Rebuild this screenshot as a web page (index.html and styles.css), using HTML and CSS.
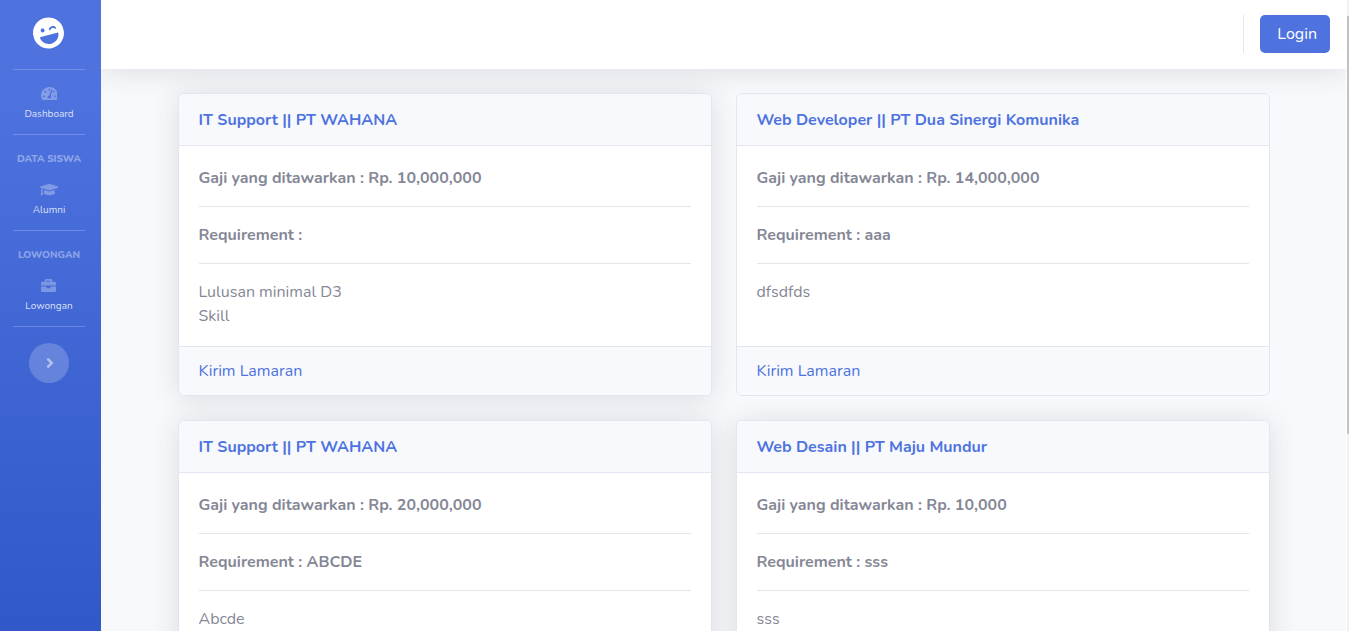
FILE: index.html
```html
<!DOCTYPE html>
<html lang="id">
<head>
<meta charset="utf-8">
<meta name="viewport" content="width=device-width, initial-scale=1">
<title>Lowongan</title>
<link rel="stylesheet" href="styles.css">
</head>
<body>
<div class="app">
  <nav class="sidebar" aria-label="Menu">
    <a class="brand" href="#" aria-label="Beranda">
      <svg class="brand-icon" viewBox="0 0 496 512"><path d="M248 8C111 8 0 119 0 256s111 248 248 248 248-111 248-248S385 8 248 8zm20.100 198c4-25.200 34.200-42.100 59.900-42.100s55.900 16.900 59.900 42.100c1.700 11.100-11.400 18.300-19.800 10.800l-9.500-8.500c-14.800-13.200-46.200-13.200-61 0L288 216.800c-8.300 7.400-21.600.4-19.900-10.800zM168 160c17.700 0 32 14.300 32 32s-14.300 32-32 32-32-14.300-32-32 14.300-32 32-32zm230.900 141C391.400 373.900 327.700 432 247 432c-80.700 0-142-54.900-150.900-128-1.200-9.500 6.300-18 15.900-18h271c9.600 0 17.100 5.400 15.900 15z"/></svg>
    </a>
    <hr class="divider">
    <a class="nav-link" href="#">
      <svg class="nav-icon" viewBox="0 0 576 512"><path d="M288 32C128.940 32 0 160.940 0 320c0 52.800 14.250 102.260 39.060 144.800 5.610 9.620 16.300 15.200 27.440 15.200h443c11.140 0 21.830-5.580 27.440-15.200C561.750 422.260 576 372.800 576 320c0-159.060-128.940-288-288-288zm0 64c14.710 0 26.580 10.130 30.320 23.650-1.110 2.260-2.640 4.230-3.450 6.670l-9.220 27.670c-5.130 3.490-10.970 6.010-17.640 6.010-17.670 0-32-14.330-32-32S270.330 96 288 96zM96 384c-17.670 0-32-14.330-32-32s14.330-32 32-32 32 14.330 32 32-14.330 32-32 32zm48-160c-17.670 0-32-14.330-32-32s14.330-32 32-32 32 14.330 32 32-14.330 32-32 32zm246.770-72.410l-61.330 184C343.130 347.330 352 364.540 352 384c0 11.720-3.380 22.550-8.880 32H232.880c-5.500-9.450-8.880-20.280-8.880-32 0-33.940 26.500-61.430 59.900-63.590l61.340-184.010c4.170-12.560 17.730-19.450 30.360-15.170 12.570 4.190 19.350 17.790 15.170 30.360zm14.660 57.200l15.520-46.550c3.470-1.290 7.130-2.230 11.050-2.230 17.670 0 32 14.330 32 32s-14.330 32-32 32c-11.380-.01-20.890-6.280-26.570-15.220zM480 384c-17.670 0-32-14.330-32-32s14.330-32 32-32 32 14.330 32 32-14.330 32-32 32z"/></svg>
      <span>Dashboard</span>
    </a>
    <hr class="divider">
    <div class="heading">Data Siswa</div>
    <a class="nav-link" href="#">
      <svg class="nav-icon" viewBox="0 0 640 512"><path d="M622.340 153.200L343.400 67.500c-15.200-4.670-31.600-4.670-46.790 0L17.660 153.200c-23.540 7.230-23.540 38.360 0 45.590l48.630 14.940c-10.670 13.190-17.230 29.280-17.880 46.900C38.780 266.150 32 276.110 32 288c0 10.780 5.680 19.850 13.860 25.650L20.330 428.530C18.110 438.520 25.710 448 35.940 448h56.110c10.240 0 17.840-9.480 15.620-19.470L82.140 313.650C90.320 307.850 96 298.780 96 288c0-11.570-6.470-21.250-15.660-26.870.76-15.020 8.440-28.300 20.690-36.720L296.600 284.500c9.060 2.780 26.440 6.250 46.790 0l278.950-85.700c23.550-7.240 23.550-38.360 0-45.600zM352.790 315.090c-28.530 8.760-52.840 3.920-65.590 0l-145.020-44.550L128 384c0 35.350 85.960 64 192 64s192-28.650 192-64l-14.180-113.470-145.030 44.560z"/></svg>
      <span>Alumni</span>
    </a>
    <hr class="divider">
    <div class="heading">Lowongan</div>
    <a class="nav-link" href="#">
      <svg class="nav-icon" viewBox="0 0 512 512"><path d="M320 336c0 8.840-7.160 16-16 16h-96c-8.840 0-16-7.160-16-16v-48H0v144c0 25.600 22.400 48 48 48h416c25.600 0 48-22.400 48-48V288H320v48zm144-208h-80V80c0-25.600-22.400-48-48-48H176c-25.600 0-48 22.400-48 48v48H48c-25.600 0-48 22.400-48 48v80h512v-80c0-25.600-22.400-48-48-48zm-144 0H192V96h128v32z"/></svg>
      <span>Lowongan</span>
    </a>
    <hr class="divider">
    <button class="toggle" type="button" aria-label="Perluas menu">
      <svg class="toggle-icon" viewBox="0 0 256 512"><path d="M224.300 273l-136 136c-9.400 9.400-24.600 9.400-33.900 0l-22.600-22.600c-9.400-9.400-9.400-24.600 0-33.900l96.400-96.400-96.400-96.400c-9.400-9.400-9.400-24.600 0-33.900L54.300 103c9.400-9.400 24.600-9.400 33.900 0l136 136c9.500 9.400 9.500 24.600.1 34z"/></svg>
    </button>
  </nav>

  <div class="page">
    <header class="topbar">
      <span class="topbar-divider"></span>
      <a class="login" href="#">Login</a>
    </header>
    <main class="cards">
      <article class="card shadow">
        <h2 class="card-header">IT Support || PT WAHANA</h2>
        <div class="card-body">
          <b>Gaji yang ditawarkan : Rp. 10,000,000</b>
          <hr>
          <b>Requirement :</b>
          <hr>
          <p>Lulusan minimal D3<br>Skill</p>
        </div>
        <div class="card-footer"><a href="#">Kirim Lamaran</a></div>
      </article>
      <article class="card">
        <h2 class="card-header">Web Developer || PT Dua Sinergi Komunika</h2>
        <div class="card-body">
          <b>Gaji yang ditawarkan : Rp. 14,000,000</b>
          <hr>
          <b>Requirement : aaa</b>
          <hr>
          <p>dfsdfds</p>
        </div>
        <div class="card-footer"><a href="#">Kirim Lamaran</a></div>
      </article>
      <article class="card shadow">
        <h2 class="card-header">IT Support || PT WAHANA</h2>
        <div class="card-body">
          <b>Gaji yang ditawarkan : Rp. 20,000,000</b>
          <hr>
          <b>Requirement : ABCDE</b>
          <hr>
          <p>Abcde</p>
        </div>
        <div class="card-footer"><a href="#">Kirim Lamaran</a></div>
      </article>
      <article class="card shadow">
        <h2 class="card-header">Web Desain || PT Maju Mundur</h2>
        <div class="card-body">
          <b>Gaji yang ditawarkan : Rp. 10,000</b>
          <hr>
          <b>Requirement : sss</b>
          <hr>
          <p>sss</p>
        </div>
        <div class="card-footer"><a href="#">Kirim Lamaran</a></div>
      </article>
    </main>
  </div>
  <div class="scrollbar"><div class="scroll-thumb"></div></div>
</div>
</body>
</html>
```
FILE: styles.css
```css
* { box-sizing: border-box; }

body {
  margin: 0;
  font: 400 16px/24px Nunito, "Open Sans", sans-serif;
  color: #858796;
  background: #f8f9fc;
}

a { color: #4e73df; text-decoration: none; }

.app { display: flex; height: 100vh; overflow: hidden; }

/* Sidebar */
.sidebar {
  flex: none;
  width: 101px;
  padding-right: 3px;
  display: flex;
  flex-direction: column;
  align-items: center;
  background: linear-gradient(180deg, #4e73df 14%, #3158c9 100%);
}

.brand {
  display: flex;
  align-items: center;
  height: 67px;
  padding: 0 2px 2px 0;
}

.brand-icon {
  width: 31px;
  height: 32px;
  fill: #fff;
  transform: rotate(-15deg);
}

.divider {
  width: 72px;
  margin: 2px 0 0;
  border: 0;
  border-top: 1px solid rgba(255, 255, 255, .2);
}

.nav-link {
  display: flex;
  flex-direction: column;
  align-items: center;
  gap: 6px;
  padding: 16px 0 11px;
  font-size: 10px;
  line-height: 14px;
  color: rgba(255, 255, 255, .8);
}

.nav-icon { height: 15px; fill: rgba(255, 255, 255, .3); }

.heading {
  padding-top: 17px;
  font-size: 10px;
  font-weight: 800;
  line-height: 14px;
  text-transform: uppercase;
  color: rgba(255, 255, 255, .4);
}

.toggle {
  display: flex;
  align-items: center;
  justify-content: center;
  width: 40px;
  height: 40px;
  margin-top: 16px;
  padding: 0 0 0 2px;
  border: 0;
  border-radius: 50%;
  background: rgba(255, 255, 255, .2);
}

.toggle-icon { height: 16px; fill: rgba(255, 255, 255, .5); }

/* Page */
.page {
  flex: 1;
  min-width: 0;
  overflow-y: auto;
  scrollbar-width: none;
}

.topbar {
  position: relative;
  display: flex;
  align-items: center;
  justify-content: flex-end;
  gap: 16px;
  height: 69px;
  padding: 0 16px 1px;
  background: #fff;
  box-shadow: 0 2px 28px rgba(58, 59, 69, .15);
}

.topbar-divider { width: 1px; height: 38px; background: #e3e6f0; }

.login {
  padding: 7px 13px 7px 17px;
  border-radius: 5px;
  background: #4e73df;
  color: #fff;
}

.cards {
  display: grid;
  grid-template-columns: repeat(2, minmax(0, 1fr));
  gap: 24px;
  max-width: 1140px;
  margin: 0 auto;
  padding: 24px;
}

.card {
  display: flex;
  flex-direction: column;
  overflow: hidden;
  border: 1px solid #e3e6f0;
  border-radius: 6px;
  background: #fff;
}

.shadow { box-shadow: 0 2px 28px rgba(58, 59, 69, .15); }

.card-header {
  margin: 0;
  padding: 14px 20px 13px;
  border-bottom: 1px solid #e3e6f0;
  background: #f8f9fc;
  font-size: 16px;
  font-weight: 700;
  line-height: 24px;
  color: #4e73df;
}

.card-body { flex: 1; padding: 20px 20px 18px; }

.card-body hr {
  margin: 16px 0;
  border: 0;
  border-top: 1px solid #e5e5e7;
}

.card-body p { margin: 0; }

.card-footer {
  padding: 12px 20px;
  border-top: 1px solid #e3e6f0;
  background: #f8f9fc;
}

/* Scroll indicator */
.scrollbar {
  flex: none;
  width: 3px;
  padding-top: 16px;
  border-left: 1px solid #fff;
  background: #f1f1f1;
}

.scroll-thumb { height: 68%; background: #c1c1c1; }
```
